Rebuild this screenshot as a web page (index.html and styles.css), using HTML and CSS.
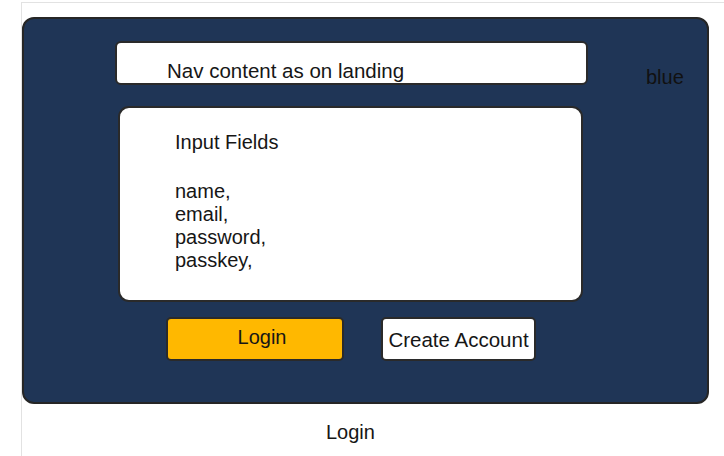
FILE: index.html
```html
<!DOCTYPE html>
<html>
<head>
<meta charset="utf-8">
<link rel="stylesheet" href="styles.css">
</head>
<body>
<div class="frame">
  <div class="panel">
    <div class="top-row">
      <div class="nav">Nav content as on landing</div>
      <div class="note">blue</div>
    </div>
    <div class="fields">
      <div class="fields-title">Input Fields</div>
      <div class="fields-list">name,<br>email,<br>password,<br>passkey,</div>
    </div>
    <div class="actions">
      <div class="btn btn-login">Login</div>
      <div class="btn btn-create">Create Account</div>
    </div>
  </div>
  <div class="caption">Login</div>
</div>
</body>
</html>
```

FILE: styles.css
```css
html, body {
  margin: 0;
  padding: 0;
  background: #ffffff;
  overflow: hidden;
}
body {
  font-family: "Liberation Sans", Arial, sans-serif;
  color: #161616;
  font-size: 20px;
}
.frame {
  margin: 2px 0 0 21px;
  width: 720px;
  height: 470px;
  border-top: 1px solid #e2e2e2;
  border-left: 1px solid #e2e2e2;
  box-sizing: border-box;
  padding-top: 14px;
}
.panel {
  width: 687px;
  height: 387px;
  box-sizing: border-box;
  background: #1f3556;
  border: 2px solid #262626;
  border-radius: 12px;
  padding: 22px 0 0 91px;
  display: flex;
  flex-direction: column;
}
.top-row {
  display: flex;
  align-items: flex-start;
  height: 44px;
}
.nav {
  width: 473px;
  height: 44px;
  box-sizing: border-box;
  background: #fff;
  border: 2px solid #2a2a2a;
  border-radius: 6px;
  padding: 16px 0 0 50px;
  display: flex;
  align-items: center;
  line-height: 1;
  font-size: 20.5px;
}
.note {
  margin-left: 58px;
  margin-top: 25px;
  color: #111;
  font-size: 20px;
  line-height: 23px;
}
.fields {
  margin: 21px 0 0 3px;
  width: 465px;
  height: 196px;
  box-sizing: border-box;
  background: #fff;
  border: 2px solid #2a2a2a;
  border-radius: 11px;
  padding: 23px 0 0 55px;
  line-height: 23px;
}
.fields-title {
  margin-bottom: 26px;
}
.actions {
  display: flex;
  gap: 37px;
  margin: 15px 0 0 51px;
}
.btn {
  height: 44px;
  box-sizing: border-box;
  border: 2px solid #2a2a2a;
  border-radius: 5px;
  display: flex;
  align-items: center;
  justify-content: center;
}
.btn-login {
  width: 178px;
  background: #ffb800;
  padding: 0 0 3px 14px;
}
.btn-create {
  width: 155px;
  background: #fff;
  font-size: 20.5px;
  padding-top: 1px;
}
.caption {
  margin: 17px 0 0 304px;
}
```
